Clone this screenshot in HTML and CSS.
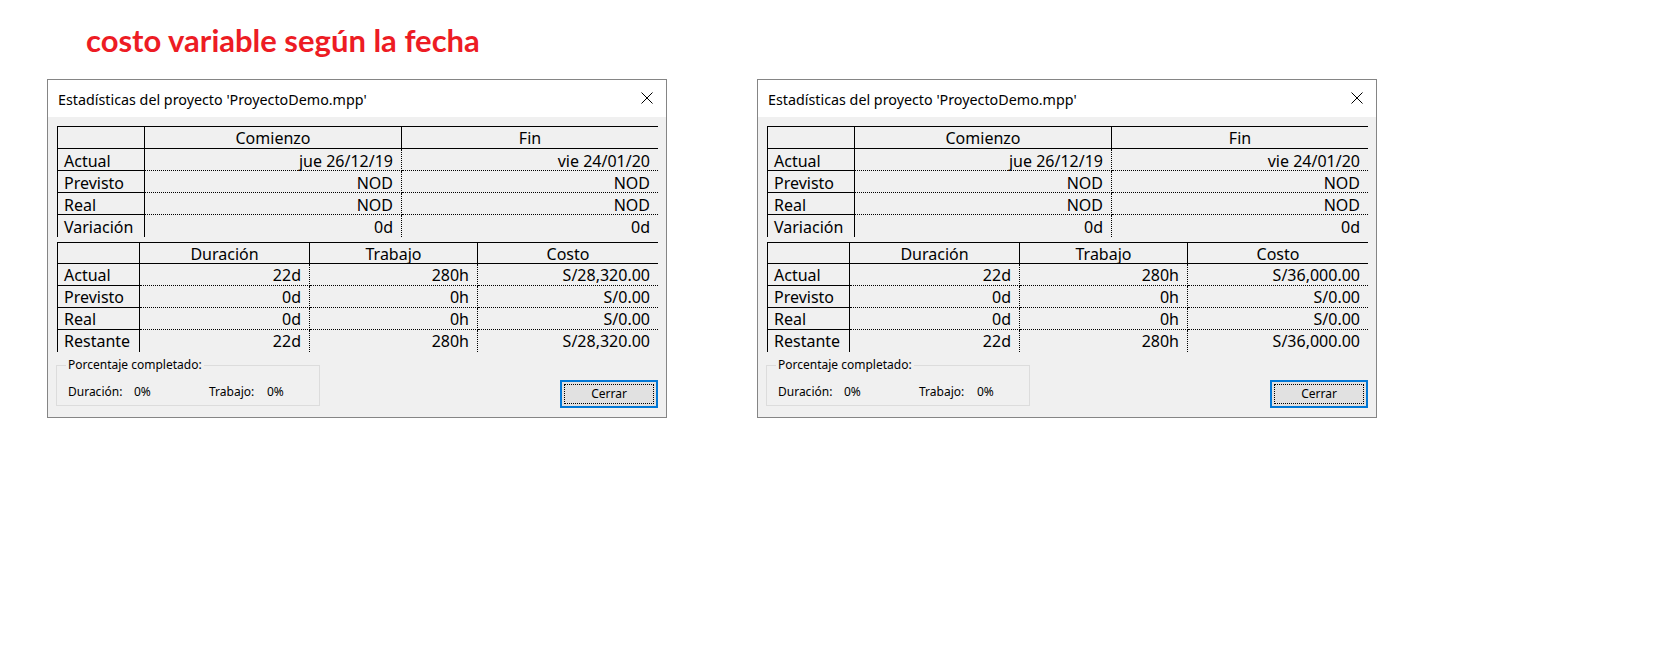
FILE: index.html
```html
<!DOCTYPE html>
<html lang="es">
<head>
<meta charset="utf-8">
<title>costo variable según la fecha</title>
<link rel="stylesheet" href="styles.css">
</head>
<body>
<h1 class="heading">costo variable según la fecha</h1>
<div class="dialogs">
  <section class="dialog">
    <header class="titlebar">
      <span class="title">Estadísticas del proyecto 'ProyectoDemo.mpp'</span>
      <svg class="close" width="12" height="12" viewBox="0 0 12 12"><path d="M0.5 0.5 L11.5 11.5 M11.5 0.5 L0.5 11.5" stroke="#000" stroke-width="1" fill="none"/></svg>
    </header>
    <div class="body">
      <div class="grid grid-dates">
        <div class="cell hd"></div><div class="cell hd">Comienzo</div><div class="cell hd end">Fin</div>
        <div class="cell lb">Actual</div><div class="cell dt">jue 26/12/19</div><div class="cell dt end">vie 24/01/20</div>
        <div class="cell lb">Previsto</div><div class="cell dt">NOD</div><div class="cell dt end">NOD</div>
        <div class="cell lb">Real</div><div class="cell dt">NOD</div><div class="cell dt end">NOD</div>
        <div class="cell lb last">Variación</div><div class="cell dt last">0d</div><div class="cell dt end last">0d</div>
      </div>
      <div class="grid grid-totals">
        <div class="cell hd"></div><div class="cell hd">Duración</div><div class="cell hd">Trabajo</div><div class="cell hd end">Costo</div>
        <div class="cell lb">Actual</div><div class="cell dt">22d</div><div class="cell dt">280h</div><div class="cell dt end">S/28,320.00</div>
        <div class="cell lb">Previsto</div><div class="cell dt">0d</div><div class="cell dt">0h</div><div class="cell dt end">S/0.00</div>
        <div class="cell lb">Real</div><div class="cell dt">0d</div><div class="cell dt">0h</div><div class="cell dt end">S/0.00</div>
        <div class="cell lb last">Restante</div><div class="cell dt last">22d</div><div class="cell dt last">280h</div><div class="cell dt end last">S/28,320.00</div>
      </div>
      <div class="footer">
        <fieldset class="group">
          <legend>Porcentaje completado:</legend>
          <div class="pct">
            <span>Duración:</span><span>0%</span><span>Trabajo:</span><span>0%</span>
          </div>
        </fieldset>
        <button class="btn" type="button"><span class="btn-focus">Cerrar</span></button>
      </div>
    </div>
  </section>

  <section class="dialog">
    <header class="titlebar">
      <span class="title">Estadísticas del proyecto 'ProyectoDemo.mpp'</span>
      <svg class="close" width="12" height="12" viewBox="0 0 12 12"><path d="M0.5 0.5 L11.5 11.5 M11.5 0.5 L0.5 11.5" stroke="#000" stroke-width="1" fill="none"/></svg>
    </header>
    <div class="body">
      <div class="grid grid-dates">
        <div class="cell hd"></div><div class="cell hd">Comienzo</div><div class="cell hd end">Fin</div>
        <div class="cell lb">Actual</div><div class="cell dt">jue 26/12/19</div><div class="cell dt end">vie 24/01/20</div>
        <div class="cell lb">Previsto</div><div class="cell dt">NOD</div><div class="cell dt end">NOD</div>
        <div class="cell lb">Real</div><div class="cell dt">NOD</div><div class="cell dt end">NOD</div>
        <div class="cell lb last">Variación</div><div class="cell dt last">0d</div><div class="cell dt end last">0d</div>
      </div>
      <div class="grid grid-totals">
        <div class="cell hd"></div><div class="cell hd">Duración</div><div class="cell hd">Trabajo</div><div class="cell hd end">Costo</div>
        <div class="cell lb">Actual</div><div class="cell dt">22d</div><div class="cell dt">280h</div><div class="cell dt end">S/36,000.00</div>
        <div class="cell lb">Previsto</div><div class="cell dt">0d</div><div class="cell dt">0h</div><div class="cell dt end">S/0.00</div>
        <div class="cell lb">Real</div><div class="cell dt">0d</div><div class="cell dt">0h</div><div class="cell dt end">S/0.00</div>
        <div class="cell lb last">Restante</div><div class="cell dt last">22d</div><div class="cell dt last">280h</div><div class="cell dt end last">S/36,000.00</div>
      </div>
      <div class="footer">
        <fieldset class="group">
          <legend>Porcentaje completado:</legend>
          <div class="pct">
            <span>Duración:</span><span>0%</span><span>Trabajo:</span><span>0%</span>
          </div>
        </fieldset>
        <button class="btn" type="button"><span class="btn-focus">Cerrar</span></button>
      </div>
    </div>
  </section>
</div>
</body>
</html>
```

FILE: styles.css
```css
* { box-sizing: border-box; }

html, body {
  margin: 0;
  padding: 0;
  background: #ffffff;
}

body {
  font-family: "Noto Sans", "Open Sans", sans-serif;
  color: #000;
}

.heading {
  margin: 0;
  padding: 20px 0 0 86px;
  height: 60px;
  font-family: Lato, "Noto Sans", sans-serif;
  font-weight: 700;
  font-size: 31px;
  line-height: 40px;
  color: #ed1c24;
}

.dialogs {
  display: flex;
  gap: 90px;
  margin-top: 19px;
  padding-left: 47px;
}

.dialog {
  width: 620px;
  height: 339px;
  border: 1px solid #858585;
  background: #f0f0f0;
  display: flex;
  flex-direction: column;
}

.titlebar {
  height: 37px;
  flex: none;
  background: #ffffff;
  display: flex;
  align-items: center;
  justify-content: space-between;
  padding: 1px 13px 0 10px;
}

.title {
  font-size: 14.3px;
  line-height: 19px;
  white-space: nowrap;
}

.close {
  display: block;
  margin-top: -3px;
}

.body {
  flex: 1;
  display: flex;
  flex-direction: column;
  padding: 9px 8px 9px 9px;
}

.grid {
  display: grid;
  width: 601px;
  border-top: 1px solid #000;
  border-left: 1px solid #000;
  grid-auto-rows: 22px;
  font-size: 16px;
  line-height: 21px;
}

.grid-dates {
  grid-template-columns: 87px 257px 256px;
}

.grid-totals {
  margin-top: 5px;
  grid-template-columns: 82px 170px 168px 180px;
  grid-template-rows: 21px;
}

.cell {
  white-space: nowrap;
  background: #f0f0f0;
}

.hd {
  border-right: 1px solid #000;
  border-bottom: 1px solid #000;
  text-align: center;
  padding-top: 1px;
  overflow: hidden;
}

.lb {
  border-right: 1px solid #000;
  border-bottom: 1px solid #000;
  padding-left: 6px;
  padding-top: 2px;
}

.dt {
  border-right: 1px dotted #000;
  border-bottom: 1px dotted #000;
  text-align: right;
  padding-right: 8px;
  padding-top: 2px;
}

.grid-totals .lb,
.grid-totals .dt {
  padding-top: 1px;
}

.end { border-right: none; }
.last { border-bottom: none; }

.footer {
  margin-top: auto;
  margin-left: -1px;
  display: flex;
  justify-content: space-between;
  align-items: flex-end;
}

.group {
  margin: 0 0 2px 0;
  width: 264px;
  height: 48px;
  border: 1px solid #dcdcdc;
  padding: 0 0 0 9px;
  font-size: 12px;
}

.group legend {
  padding: 0 2px;
  font-size: 12px;
  line-height: 14px;
}

.pct {
  display: grid;
  grid-template-columns: 66px 75px 58px auto;
  padding: 12px 0 0 2px;
  line-height: 16px;
}

.btn {
  width: 98px;
  height: 28px;
  margin: 0;
  padding: 2px;
  border: 2px solid #0078d7;
  background: #e1e1e1;
  font-family: "Noto Sans", sans-serif;
  font-size: 12px;
  color: #000;
  display: flex;
}

.btn-focus {
  flex: 1;
  border: 1px dotted #000;
  display: flex;
  align-items: center;
  justify-content: center;
  line-height: 14px;
}
```
